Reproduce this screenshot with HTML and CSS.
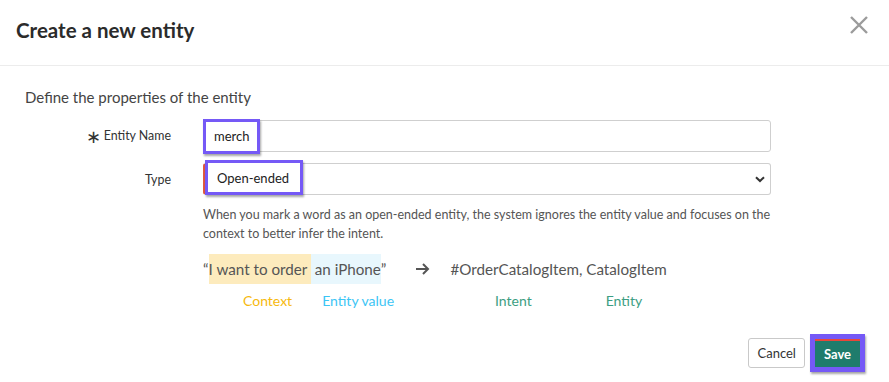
FILE: index.html
```html
<!DOCTYPE html>
<html lang="en">

<head>
  <meta charset="UTF-8" />
  <meta name="viewport" content="width=device-width, initial-scale=1.0" />
  <title>Create a new entity</title>
  <link rel="stylesheet" href="styles.css">
</head>

<body>
  <div class="modal">
    <div class="modal-header">
      <div class="modal-title">Create a new entity</div>
      <button class="close" aria-label="Close">
        <svg width="20" height="20" viewBox="0 0 20 20">
          <path d="M2 2 L18 18 M18 2 L2 18" stroke="#9b9b9b" stroke-width="2.4" fill="none" />
        </svg>
      </button>
    </div>

    <div class="modal-body">
      <div class="section-title">Define the properties of the entity</div>

      <div class="form">
        <label class="label"><span class="req">&#x2217;</span>Entity Name</label>
        <div class="field">
          <span class="mark">merch</span>
        </div>

        <label class="label">Type</label>
        <div class="field select">
          <span class="mark">Open-ended</span>
          <svg class="chevron" width="10" height="7" viewBox="0 0 10 7">
            <path d="M1 1.2 L5 5 L9 1.2" stroke="#333" stroke-width="2" fill="none" />
          </svg>
        </div>

        <div></div>
        <div class="help">
          <p>When you mark a word as an open-ended entity, the system ignores the entity value and focuses on the context to better infer the intent.</p>

          <div class="example">
            <span class="quote">&ldquo;</span><span class="ctx">I want to order&nbsp;</span><span class="val">&nbsp;an iPhone</span><span class="quote">&rdquo;</span>
            <span class="arrow">
              <svg width="15" height="14" viewBox="0 0 15 14">
                <path d="M1 7 H13 M8 2 L13 7 L8 12" stroke="#555" stroke-width="2" fill="none" />
              </svg>
            </span>
            <span class="result">#OrderCatalogItem, CatalogItem</span>
          </div>

          <div class="legend">
            <span class="lg-context">Context</span>
            <span class="lg-value">Entity value</span>
            <span class="lg-intent">Intent</span>
            <span class="lg-entity">Entity</span>
          </div>
        </div>
      </div>
    </div>

    <div class="modal-footer">
      <button class="btn btn-cancel">Cancel</button>
      <span class="save-mark">
        <button class="btn btn-save">Save</button>
      </span>
    </div>
  </div>
</body>

</html>
```

FILE: styles.css
```css
body {
  margin: 0;
  padding: 0;
  font-family: 'Lato', 'Source Sans Pro', sans-serif;
  background-color: #fff;
  color: #333;
}

.modal {
  width: 889px;
  height: 382px;
  background-color: #fff;
}

.modal-header {
  display: flex;
  align-items: center;
  justify-content: space-between;
  height: 65px;
  padding: 0 16px;
  border-bottom: 1px solid #ececec;
}

.modal-title {
  font-size: 20.5px;
  font-weight: 700;
  color: #2b2b2b;
  margin-top: -6px;
}

.close {
  background: none;
  border: none;
  padding: 0;
  margin-right: 4px;
  margin-top: -12px;
  cursor: pointer;
}

.modal-body {
  padding: 22px 25px 0 25px;
}

.section-title {
  font-size: 15px;
  color: #444;
  margin-bottom: 14px;
}

.form {
  display: grid;
  grid-template-columns: 146px 568px;
  column-gap: 32px;
  row-gap: 11px;
  align-items: center;
}

.label {
  font-size: 12.4px;
  color: #333;
  text-align: right;
}

.req {
  font-size: 18px;
  line-height: 1;
  vertical-align: -3px;
  margin-right: 3px;
}

.field {
  position: relative;
  display: flex;
  align-items: center;
  height: 30px;
  border: 1px solid #cfcfcf;
  border-radius: 3px;
  font-size: 13px;
  color: #222;
}

.mark {
  display: flex;
  align-items: center;
  height: 29px;
  margin: 0 0 0 -1px;
  padding: 0 8px;
  border: 3px solid #7559f6;
  background-color: #fff;
  box-shadow: 1px 2px 2px rgba(0, 0, 0, 0.35);
}

.select {
  border-left: 2px solid #e0593f;
}

.select .mark {
  margin-left: 0;
  margin-top: -3px;
  padding: 0 11px 0 9px;
}

.chevron {
  position: absolute;
  right: 5px;
  top: 12px;
}

.help {
  margin-top: -1px;
}

.help p {
  margin: 0;
  font-size: 12.5px;
  line-height: 19px;
  color: #555;
}

.example {
  display: flex;
  align-items: center;
  margin-top: 11px;
  font-size: 15.2px;
  color: #555;
}

.quote {
  line-height: 30px;
}

.ctx {
  line-height: 30px;
  background-color: #fdebbd;
}

.val {
  line-height: 30px;
  background-color: #e8f7fd;
}

.arrow {
  display: flex;
  margin-left: 29px;
  margin-right: 20px;
}

.legend {
  display: flex;
  margin-top: 8px;
  padding-left: 40px;
  font-size: 14px;
}

.lg-context {
  color: #f6b90e;
}

.lg-value {
  color: #3cc5f5;
  margin-left: 30px;
}

.lg-intent {
  color: #3c9e82;
  margin-left: 101px;
}

.lg-entity {
  color: #3c9e82;
  margin-left: 74px;
}

.modal-footer {
  display: flex;
  justify-content: flex-end;
  align-items: center;
  gap: 5px;
  padding: 25px 24px 0 0;
}

.btn {
  font-family: inherit;
  font-size: 13px;
  border-radius: 3px;
  height: 30px;
  cursor: pointer;
}

.btn-cancel {
  background-color: #fff;
  border: 1px solid #c9c9c9;
  color: #333;
  padding: 0 8px;
}

.save-mark {
  display: inline-flex;
  border: 5px solid #7559f6;
  box-shadow: 1px 2px 2px rgba(0, 0, 0, 0.35);
}

.btn-save {
  height: 28px;
  background-color: #1f7c6c;
  border: none;
  border-top: 2px solid #e8473a;
  border-radius: 0;
  color: #fff;
  font-weight: 700;
  padding: 0 9px;
}
```
